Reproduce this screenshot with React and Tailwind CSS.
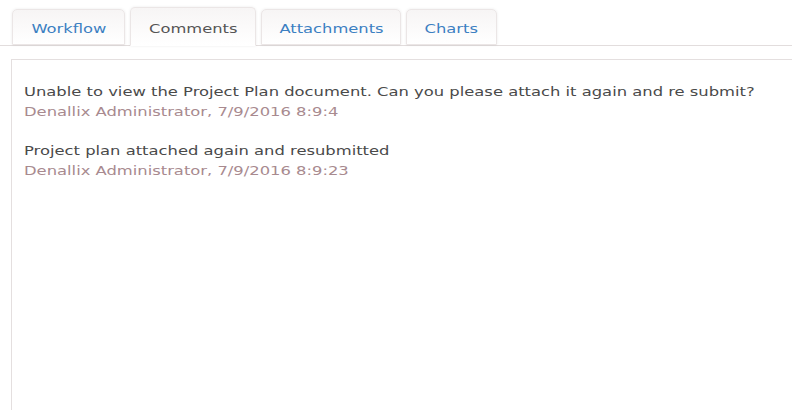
export default function App() {
  const tabs = [
    { label: "Workflow", w: "w-[113px]", active: false },
    { label: "Comments", w: "w-[126px]", active: true },
    { label: "Attachments", w: "w-[140px]", active: false },
    { label: "Charts", w: "w-[91px]", active: false },
  ];
  const comments = [
    {
      text: "Unable to view the Project Plan document. Can you please attach it again and re submit?",
      meta: "Denallix Administrator, 7/9/2016 8:9:4",
    },
    {
      text: "Project plan attached again and resubmitted",
      meta: "Denallix Administrator, 7/9/2016 8:9:23",
    },
  ];
  return (
    <div className="w-[792px] h-[410px] bg-white overflow-hidden font-['DejaVu_Sans',Verdana,sans-serif] text-[13px]">
      <div className="flex items-end gap-[5px] pl-[12px] h-[46px] border-b border-[#e2dddd]">
        {tabs.map((t) => (
          <div
            key={t.label}
            className={`${t.w} ${t.active ? "h-[39px] mb-[-1px] border-b-white text-[#555555] pt-[5px]" : "h-[36px] text-[#3c80c2] pt-[3px]"} flex items-center justify-center bg-gradient-to-b from-[#f7f5f5] to-white border border-[#ebe6e6] rounded-t-[5px] shadow-[0_0_3px_rgba(0,0,0,0.08)]`}
          >
            <span className="inline-block scale-x-[1.255]">{t.label}</span>
          </div>
        ))}
      </div>
      <div className="mt-[13px] ml-[11px] h-[360px] border-t border-l border-[#e4dfdf] pl-[12px] pt-[22px]">
        {comments.map((c, i) => (
          <div key={i} className="mb-[19px] leading-[20px]">
            <div className="text-[#4a4a4a]">
              <span className="inline-block origin-left scale-x-[1.258] whitespace-nowrap">{c.text}</span>
            </div>
            <div className="text-[#a88a8f]">
              <span className="inline-block origin-left scale-x-[1.258] whitespace-nowrap">{c.meta}</span>
            </div>
          </div>
        ))}
      </div>
    </div>
  );
}
